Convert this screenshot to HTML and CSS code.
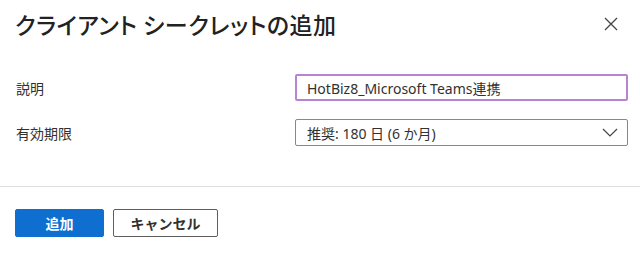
FILE: index.html
```html
<!DOCTYPE html>
<html lang="ja">
<head>
<meta charset="utf-8">
<link rel="stylesheet" href="styles.css">
</head>
<body>
<div class="panel">
  <header class="header">
    <h1 class="title">クライアント シークレットの追加</h1>
    <button class="close" aria-label="閉じる">
      <svg width="14" height="14" viewBox="0 0 14 14"><path d="M1 1 L13 13 M13 1 L1 13" stroke="#444" stroke-width="1.3" fill="none"/></svg>
    </button>
  </header>
  <div class="form">
    <div class="row">
      <label class="label">説明</label>
      <div class="input focused">HotBiz8_Microsoft Teams連携</div>
    </div>
    <div class="row">
      <label class="label">有効期限</label>
      <div class="input select">
        <span>推奨: 180 日 (6 か月)</span>
        <svg class="chev" width="16" height="9" viewBox="0 0 16 9"><path d="M1 1 L8 8 L15 1" stroke="#444" stroke-width="1.2" fill="none"/></svg>
      </div>
    </div>
  </div>
  <div class="divider"></div>
  <div class="actions">
    <button class="btn primary">追加</button>
    <button class="btn secondary">キャンセル</button>
  </div>
</div>
</body>
</html>
```
FILE: styles.css
```css
html, body {
  margin: 0;
  padding: 0;
  background: #fff;
}
body {
  font-family: "Noto Sans", "Noto Sans CJK JP", sans-serif;
  color: #262626;
}
.panel {
  width: 640px;
  height: 266px;
  display: flex;
  flex-direction: column;
}
.header {
  display: flex;
  align-items: center;
  justify-content: space-between;
  padding: 7px 22px 0 15px;
  height: 34px;
}
.title {
  margin: 0;
  font-family: "Noto Sans CJK JP", sans-serif;
  font-feature-settings: "palt";
  font-size: 23px;
  font-weight: 500;
  color: #222;
  letter-spacing: 0.5px;
}
.close {
  border: 0;
  background: none;
  padding: 0;
  width: 14px;
  height: 14px;
  display: flex;
}
.form {
  padding: 33px 12px 0 16px;
  display: flex;
  flex-direction: column;
  gap: 18px;
}
.row {
  display: flex;
  align-items: center;
}
.label {
  width: 279px;
  font-family: "Noto Sans CJK JP", sans-serif;
  font-size: 14px;
  color: #323130;
}
.input {
  flex: 1;
  box-sizing: border-box;
  height: 27px;
  border: 1px solid #8a8886;
  border-radius: 2px;
  padding: 0 11px;
  display: flex;
  align-items: center;
  font-size: 14px;
  color: #323130;
}
.input.focused {
  border: 2px solid #b584d2;
  padding: 0 10px;
}
.select {
  justify-content: space-between;
  padding-right: 9px;
}
.divider {
  margin-top: 40px;
  height: 1px;
  background: #e1dfdd;
}
.actions {
  display: flex;
  gap: 9px;
  padding: 22px 0 0 15px;
}
.btn {
  box-sizing: border-box;
  height: 28px;
  border-radius: 2px;
  font-family: "Noto Sans CJK JP", sans-serif;
  font-size: 14px;
  font-weight: 700;
  padding: 0;
}
.primary {
  width: 89px;
  background: #0f6fd1;
  border: 1px solid #0f6fd1;
  color: #fff;
}
.secondary {
  width: 105px;
  background: #fff;
  border: 1px solid #605e5c;
  color: #323130;
}
```
